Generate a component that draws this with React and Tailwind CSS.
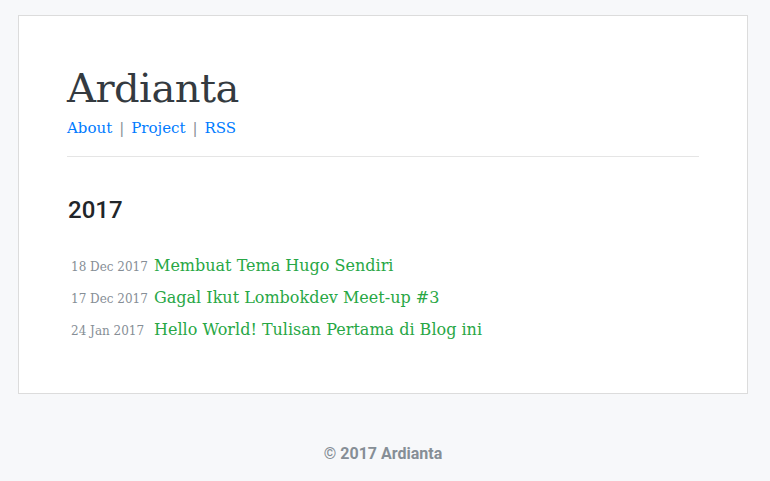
import React from "react";

const posts = [
  { date: "18 Dec 2017", title: "Membuat Tema Hugo Sendiri" },
  { date: "17 Dec 2017", title: "Gagal Ikut Lombokdev Meet-up #3" },
  { date: "24 Jan 2017", title: "Hello World! Tulisan Pertama di Blog ini" }
];

const serif = { fontFamily: "'DejaVu Serif', 'Liberation Serif', serif" };

export default function App() {
  return (
    <div className="min-h-[481px] bg-[#f7f8fa] pt-[15px] pl-[18px] pr-[22px] pb-6" style={{ fontFamily: "Roboto, 'Liberation Sans', sans-serif" }}>
      <div className="bg-white border border-[#dcdcdc] px-[48px] pt-[44px] pb-[51px]">
        <h1 className="text-[40px] leading-[56px] text-[#343a40] tracking-[-0.5px]" style={serif}>Ardianta</h1>
        <div className="flex items-center text-[15px] leading-[22px] text-[#007bff] mt-[1px]" style={serif}>
          <a href="#">About</a>
          <span className="text-[#868e96] mx-[7px]">|</span>
          <a href="#">Project</a>
          <span className="text-[#868e96] mx-[7px]">|</span>
          <a href="#">RSS</a>
        </div>
        <div className="border-t border-[#e5e5e5] mt-[17px]" />
        <h2 className="text-[24px] leading-[30px] font-medium text-[#212529] mt-[38px] ml-[1px]">2017</h2>
        <ul className="mt-[28px] ml-[4px] space-y-[7px]">
          {posts.map(p => (
            <li key={p.title} className="flex items-baseline" style={serif}>
              <span className="text-[12px] text-[#868e96] w-[83px] shrink-0">{p.date}</span>
              <a href="#" className="text-[16px] leading-[25px] text-[#28a745]">{p.title}</a>
            </li>
          ))}
        </ul>
      </div>
      <div className="text-center font-bold text-[16px] text-[#868e96] mt-[48px]">© 2017 Ardianta</div>
    </div>
  );
}
